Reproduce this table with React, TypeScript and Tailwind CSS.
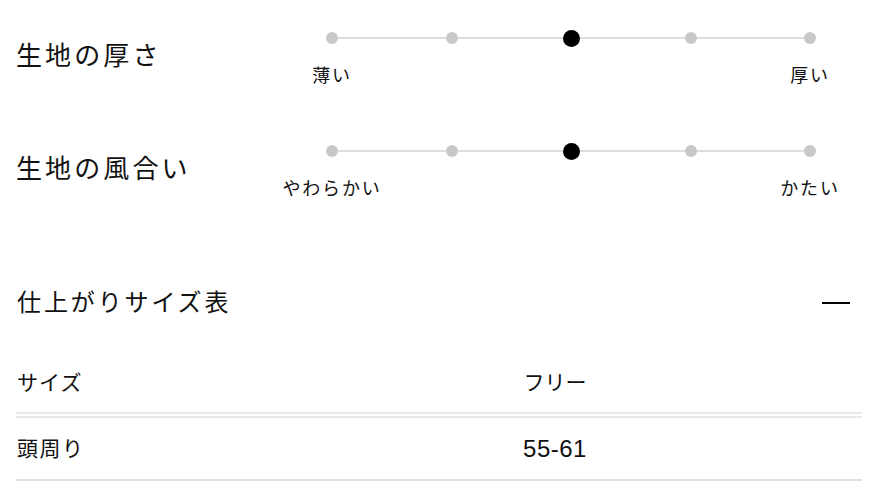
import React from 'react';

const jp = { fontFamily: '"Liberation Sans", "Noto Sans CJK JP", sans-serif' };

const Scale: React.FC<{ title: string; left: string; right: string; value: number }> = ({ title, left, right, value }) => {
  return (
    <div className="flex items-start">
      <div className="w-[316px] mt-[9px] text-[26px] leading-[36px] tracking-[0.12em] text-[#111]">{title}</div>
      <div className="w-[478px]">
        {/* track */}
        <div className="relative h-[18px] flex items-center justify-between">
          <div className="absolute left-0 right-0 top-[8px] h-[2px] bg-[#dddddd]"></div>
          {[0, 1, 2, 3, 4].map((i) => (
            <div key={i} className="relative w-0 flex justify-center">
              {i === value ? (
                <div className="shrink-0 w-[17px] h-[17px] rounded-full bg-black"></div>
              ) : (
                <div className="shrink-0 w-[12px] h-[12px] rounded-full bg-[#c8c8c8]"></div>
              )}
            </div>
          ))}
        </div>
        <div className="mt-[17px] flex justify-between text-[18px] leading-[24px] tracking-[0.1em] text-[#111]">
          <div className="w-0 flex justify-center whitespace-nowrap">{left}</div>
          <div className="w-0 flex justify-center whitespace-nowrap">{right}</div>
        </div>
      </div>
    </div>
  );
};

export default function App() {
  return (
    <div className="w-[882px] h-[502px] bg-white overflow-hidden pl-[16px] pr-[20px] pt-[29px]" style={jp}>
      <div className="flex flex-col gap-[54px]">
        <Scale title="生地の厚さ" left="薄い" right="厚い" value={2} />
        <Scale title="生地の風合い" left="やわらかい" right="かたい" value={2} />
      </div>

      {/* size table */}
      <div className="mt-[84px] flex items-center justify-between h-[36px]">
        <h3 className="text-[24px] leading-[36px] tracking-[0.12em] text-[#111] pl-[1px]">仕上がりサイズ表</h3>
        <div className="w-[28px] h-[2px] bg-black mr-[12px]"></div>
      </div>

      <div className="mt-[33px]">
        <div className="grid grid-cols-[232px_1fr] py-[14px] leading-[30px] border-b-[6px] border-double border-[#e8e8e8] text-[#111]">
          <div className="text-[21px] tracking-[0.05em] pl-[1px]">サイズ</div>
          <div className="text-[21px] text-center">フリー</div>
        </div>
        <div className="grid grid-cols-[232px_1fr] py-[15px] leading-[31px] border-b-2 border-[#e0e0e0] text-[#111]">
          <div className="text-[21px] tracking-[0.07em] pl-[1px]">頭周り</div>
          <div className="text-[24px] tracking-[0.02em] text-center">55-61</div>
        </div>
      </div>
    </div>
  );
}
